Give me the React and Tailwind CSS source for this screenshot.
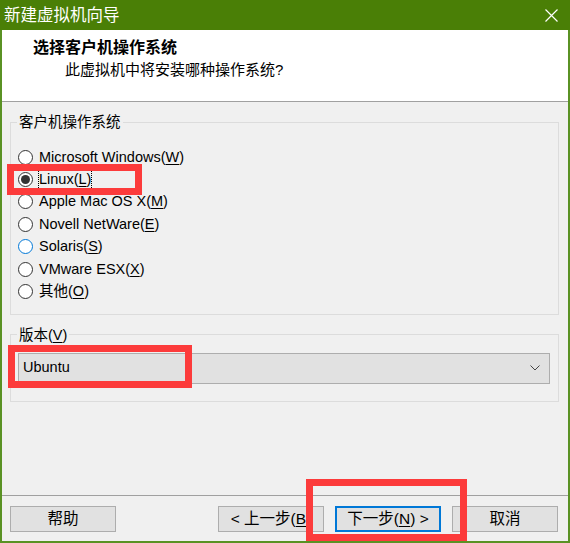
import React from 'react';

const OS_LIST = [
  { pre: 'Microsoft Windows(', key: 'W' },
  { pre: 'Linux(', key: 'L', checked: true },
  { pre: 'Apple Mac OS X(', key: 'M' },
  { pre: 'Novell NetWare(', key: 'E' },
  { pre: 'Solaris(', key: 'S', hover: true },
  { pre: 'VMware ESX(', key: 'X' },
  { pre: '其他(', key: 'O' },
];

function Radio({ checked, hover }) {
  return (
    <span
      className={`w-[15px] h-[15px] shrink-0 rounded-full border bg-white flex items-center justify-center ${hover ? 'border-[#0078d7]' : 'border-[#333]'}`}
    >
      {checked && <span className="w-[9px] h-[9px] rounded-full bg-[#333]" />}
    </span>
  );
}

function Btn({ children, primary }) {
  return (
    <button
      className={`w-[106px] h-[26px] bg-[#e1e1e1] flex items-center justify-center text-[15.5px] text-black whitespace-nowrap ${primary ? 'border-2 border-[#0078d7]' : 'border border-[#adadad]'}`}
    >
      {children}
    </button>
  );
}

export default function App() {
  return (
    <div className="relative w-[570px] h-[543px] flex flex-col overflow-hidden font-['Liberation_Sans','Noto_Sans_CJK_SC',sans-serif] text-black">
      {/* title bar */}
      <div className="h-[30px] shrink-0 bg-[#4a7f06] flex items-center justify-between pl-[4px] pr-[12px]">
        <span className="text-white text-[16.5px] leading-none">新建虚拟机向导</span>
        <svg width="13" height="13" viewBox="0 0 13 13">
          <path d="M0.5 0.5L12.5 12.5M12.5 0.5L0.5 12.5" stroke="#fff" strokeWidth="1.2" />
        </svg>
      </div>

      <div className="flex-1 flex flex-col border-x-2 border-b-2 border-[#5a9224] bg-[#f0f0f0]">
        {/* header */}
        <div className="h-[72px] shrink-0 bg-white border-b border-[#a0a0a0] pt-[8px] pl-[31px]">
          <div className="text-[16px] font-bold leading-[20px]">选择客户机操作系统</div>
          <div className="text-[15px] leading-[20px] mt-[2px] pl-[32px]">此虚拟机中将安装哪种操作系统?</div>
        </div>

        {/* body */}
        <div className="flex-1 flex flex-col px-[8px] pt-[10px] text-[14.5px]">
          <fieldset className="border border-[#dcdcdc] pl-[7px] pt-[14px] pb-[11px] w-[549px]">
            <legend className="leading-[20px] px-[2px] -ml-[1px]">客户机操作系统</legend>
            {OS_LIST.map((o) => (
              <div key={o.key} className="h-[22.4px] flex items-center gap-[6px]">
                <Radio checked={o.checked} hover={o.hover} />
                <span className={`leading-[19px] ${o.checked ? 'outline outline-1 outline-dotted outline-black' : ''}`}>
                  {o.pre}
                  <span className="underline underline-offset-2">{o.key}</span>)
                </span>
              </div>
            ))}
          </fieldset>

          <fieldset className="mt-[10px] border border-[#dcdcdc] pl-[8px] pt-[8px] pb-[17px] w-[549px]">
            <legend className="leading-[20px] px-[2px] -ml-[2px]">
              版本(<span className="underline underline-offset-2">V</span>)
            </legend>
            <div className="-ml-[1px] w-[532px] h-[31px] bg-[#e1e1e1] border border-[#adadad] flex items-center justify-between pl-[4px] pr-[9px]">
              <span>Ubuntu</span>
              <svg width="10" height="6" viewBox="0 0 10 6">
                <path d="M0.5 0.5L5 5L9.5 0.5" stroke="#444" strokeWidth="1" fill="none" />
              </svg>
            </div>
          </fieldset>

          <div className="flex-1" />
        </div>

        {/* footer */}
        <div className="border-t border-[#a0a0a0] pt-[10px] pb-[9px] pl-[8px] pr-[10px] flex items-center">
          <Btn>帮助</Btn>
          <div className="flex-1" />
          <div className="flex gap-[11px]">
            <Btn>
              &lt; 上一步(<span className="underline underline-offset-2">B</span>)
            </Btn>
            <Btn primary>
              下一步(<span className="underline underline-offset-2">N</span>) &gt;
            </Btn>
            <Btn>取消</Btn>
          </div>
        </div>
      </div>

      {/* red annotation boxes */}
      <div className="absolute left-[7px] top-[164px] w-[135px] h-[31px] border-[7px] border-[#fc3b3b]" />
      <div className="absolute left-[8px] top-[345px] w-[184px] h-[43px] border-[7px] border-[#fc3b3b]" />
      <div className="absolute left-[306px] top-[479px] w-[161px] h-[62px] border-[7px] border-[#fc3b3b]" />
    </div>
  );
}
